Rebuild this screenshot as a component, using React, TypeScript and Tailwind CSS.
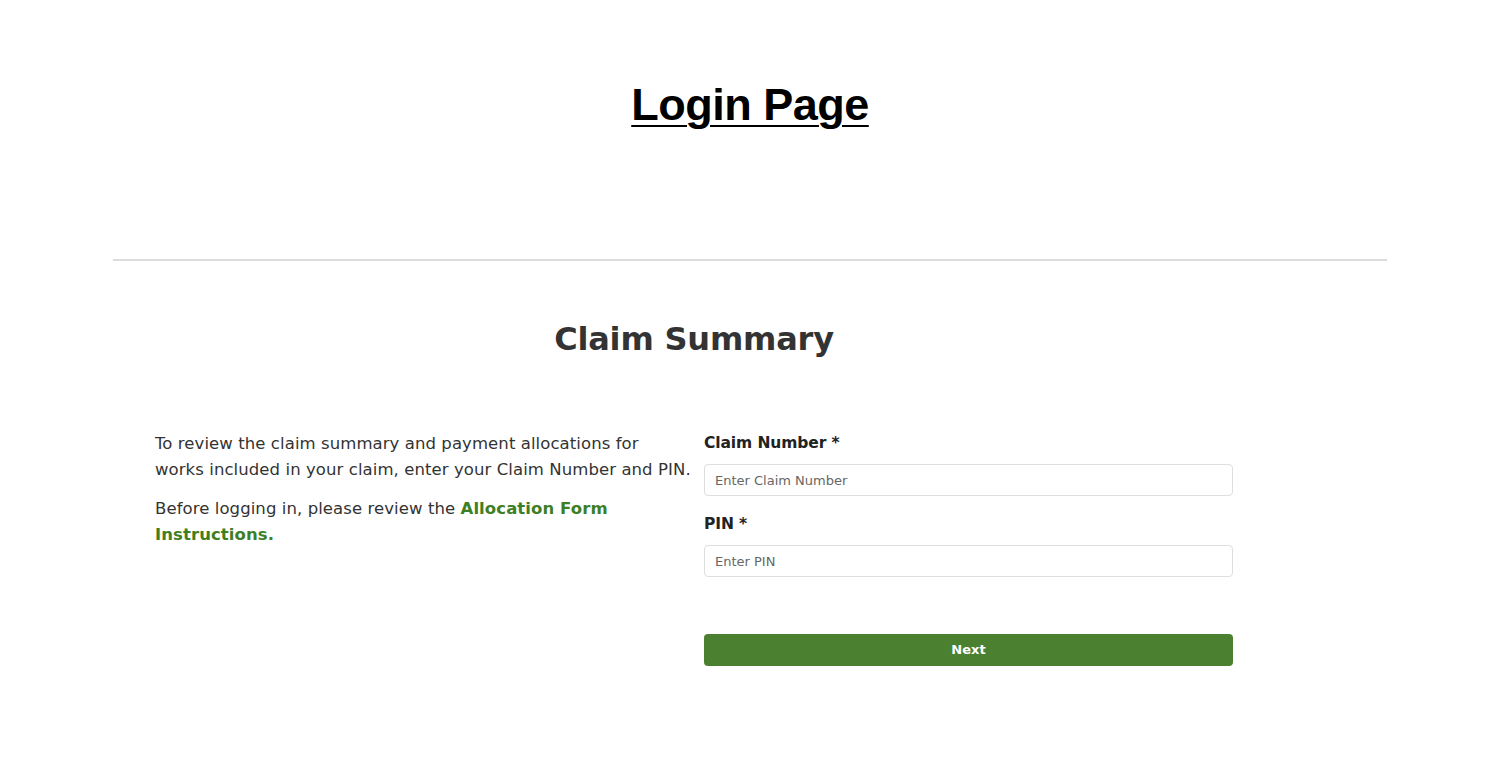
export default function App() {
  return (
    <div className="min-h-[774px] w-full bg-white">
      <div className="flex justify-center pt-[78px]">
        <h1 className="font-['Liberation_Sans',Arial,sans-serif] text-[45px] font-bold leading-[54px] tracking-[-0.5px] text-black underline decoration-[2px] underline-offset-[5px]">
          Login Page
        </h1>
      </div>

      <div className="mx-[113px] mt-[127px] h-[2px] bg-[#dcdcdc]" />

      <div className="ml-[155px] w-[1078px] font-['DejaVu_Sans',sans-serif] text-[#333]">
        <h2 className="mt-[56px] text-center text-[32px] font-bold leading-[44px] tracking-[-0.2px] text-[#333]">
          Claim Summary
        </h2>

        <div className="mt-[70px] grid grid-cols-[549px_529px]">
          <div className="pr-[4px] text-[16.5px] leading-[26px] tracking-[0.08px] text-[#333]">
            <p>
              To review the claim summary and payment allocations for
              <br />
              works included in your claim, enter your Claim Number and PIN.
            </p>
            <p className="mt-[13px] pr-[20px]">
              Before logging in, please review the{" "}
              <a href="#" className="font-bold text-[#3f7f24]">
                Allocation Form Instructions.
              </a>
            </p>
          </div>

          <div className="flex flex-col">
            <label className="text-[15.5px] font-bold leading-[24px] tracking-[-0.1px] text-[#222]">Claim Number *</label>
            <input
              className="mt-[9px] h-[32px] w-full rounded-[4px] border border-[#dedede] px-[10px] text-[13px] text-[#333] outline-none placeholder:text-[#666]"
              placeholder="Enter Claim Number"
            />
            <label className="mt-[16px] text-[15.5px] font-bold leading-[24px] tracking-[-0.1px] text-[#222]">PIN *</label>
            <input
              className="mt-[9px] h-[32px] w-full rounded-[4px] border border-[#dedede] px-[10px] text-[13px] text-[#333] outline-none placeholder:text-[#666]"
              placeholder="Enter PIN"
            />
            <button
              type="button"
              className="mt-[57px] h-[32px] w-full rounded-[4px] bg-[#4b8030] text-[13px] font-bold text-white"
            >
              Next
            </button>
          </div>
        </div>
      </div>
    </div>
  );
}
